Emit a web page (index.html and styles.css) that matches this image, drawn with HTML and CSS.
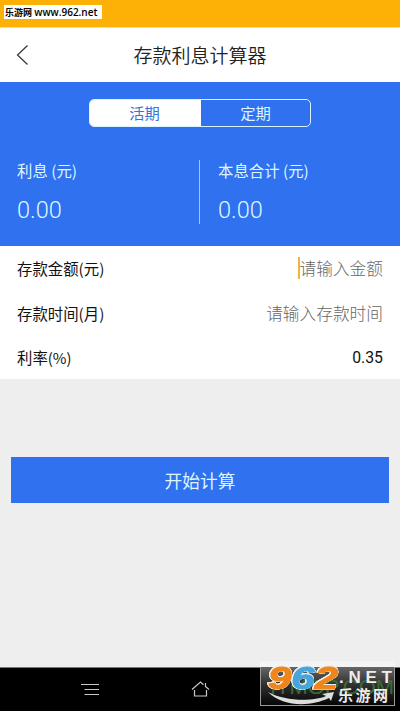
FILE: index.html
```html
<!DOCTYPE html>
<html lang="zh-CN">
<head>
<meta charset="utf-8">
<title>存款利息计算器</title>
<link rel="stylesheet" href="styles.css">
</head>
<body>
<div class="screen">
  <div class="status"><span class="site">乐游网 <b>www.962.net</b></span></div>
  <header class="header">
    <svg class="back" width="14" height="22" viewBox="0 0 14 22"><path d="M11.500 1.500 1.500 11l10 9.500"/></svg>
    <h1 class="title">存款利息计算器</h1>
  </header>
  <section class="summary">
    <div class="tabs"><div class="tab active">活期</div><div class="tab">定期</div></div>
    <div class="totals">
      <div class="total"><div class="label">利息 (元)</div><div class="value">0.00</div></div>
      <div class="total second"><div class="label">本息合计 (元)</div><div class="value">0.00</div></div>
    </div>
  </section>
  <section class="form">
    <div class="row"><span>存款金额(元)</span><span class="hint focus">请输入金额</span></div>
    <div class="row"><span>存款时间(月)</span><span class="hint">请输入存款时间</span></div>
    <div class="row"><span>利率<span class="percent">(%)</span></span><span class="rate">0.35</span></div>
  </section>
  <main class="body"><div class="submit">开始计算</div></main>
  <nav class="nav">
    <svg class="menu" width="20" height="14" viewBox="0 0 20 14"><path d="M0 1.500h18M3.500 6.500h14.500M3.500 11.500h14.500"/></svg>
    <svg class="home" width="20" height="18" viewBox="0 0 20 18"><path d="M1 9.500 9.500 2l3 2.700M14.500 6.500 18 9.500M14.500 3v4M3.500 10v6h12v-6"/></svg>
  </nav>
  <svg class="mark" width="136" height="46" viewBox="0 0 136 46">
    <defs>
      <linearGradient id="panel" x1="0" y1="0" x2="0" y2="1"><stop offset="0" stop-color="#777"/><stop offset=".5" stop-color="#333"/><stop offset="1" stop-color="#050505"/></linearGradient>
    </defs>
    <rect x=".5" y=".5" width="134" height="44" fill="url(#panel)" stroke="#999"/>
    <rect x="0" y="0" width="135" height="6" fill="#f4f4f4"/>
    <text class="green" x="10" y="33" textLength="124" lengthAdjust="spacingAndGlyphs">ITMOP.COM</text>
    <text class="digits" x="8" y="27.500" textLength="70" lengthAdjust="spacingAndGlyphs"><tspan class="orange">9</tspan><tspan class="blue">6</tspan><tspan class="orange">2</tspan></text>
    <path d="M8 31C24 40 52 41 66 35l-4-2 12-2-3 9-2-3C50 46 23 46 8 31z" fill="#ddd"/>
    <text class="net" x="79" y="21.500" textLength="53" lengthAdjust="spacing">.NET</text>
    <text class="name" x="78" y="40" textLength="50" lengthAdjust="spacing">乐游网</text>
  </svg>
</div>
</body>
</html>
```
FILE: styles.css
```css
* { box-sizing: border-box; }
body { margin: 0; font-family: Roboto, "Noto Sans CJK SC", sans-serif; color: #111; }
.screen { position: relative; width: 400px; height: 711px; display: flex; flex-direction: column; background: #eee; overflow: hidden; }
.status { height: 28px; padding: 5px 4px; background: #fdb107; border-bottom: 1px solid #f9e08e; }
.site { display: block; width: 98px; height: 14px; line-height: 15px; background: #fff; color: #000; font-size: 9px; font-weight: 700; white-space: nowrap; padding-left: 1px; }
.site b { font-family: "Open Sans", sans-serif; font-size: 10px; font-weight: 600; }
.header { height: 54px; display: flex; align-items: center; background: #fff; padding: 0 16px; }
.back { fill: none; stroke: #333; stroke-width: 1.2; }
.title { flex: 1; margin: 3px 14px 0 0; text-align: center; font-size: 19px; line-height: 28px; font-weight: 350; color: #222; }
.summary { height: 164px; background: #2f71ef; padding-top: 17px; color: #dff6ff; }
.tabs { width: 222px; height: 28px; margin: 0 auto; display: flex; border: 1px solid #d9f4ff; border-radius: 5px; overflow: hidden; }
.tab { flex: 1; text-align: center; font-size: 15.3px; line-height: 29px; }
.tab.active { background: #fff; color: #3b71d2; flex: 0 0 111px; padding-right: 2px; }
.totals { display: flex; margin-top: 33px; }
.total { width: 200px; height: 64px; padding-left: 17px; border-right: 1px solid #9cc9fa; }
.total.second { border: 0; padding-left: 18px; }
.label { font-family: "Noto Sans CJK SC", sans-serif; font-size: 15.4px; line-height: 21px; }
.value { font-size: 23.5px; line-height: 28px; margin-top: 15px; font-weight: 350; }
.form { height: 133px; background: #fff; padding: 0 17px; }
.row { height: 44.5px; display: flex; align-items: center; justify-content: space-between; font-family: "Noto Sans CJK SC", sans-serif; font-size: 15.4px; }
.percent { font-size: 14.8px; }
.hint { font-size: 16.7px; font-weight: 300; color: #666; line-height: 22px; }
.focus { border-left: 2px solid #edb63d; margin-left: -2px; }
.rate { font-family: Roboto, sans-serif; font-size: 15.8px; margin-top: 1px; }
.body { height: 288px; padding: 78px 11px 0; }
.submit { height: 46px; line-height: 50px; background: #2f71ef; color: #dff6ff; text-align: center; font-size: 17.7px; }
.nav { flex: 1; background: #000; border-top: 1px solid #777; display: flex; padding: 14px 0 0 81px; }
.nav svg { fill: none; stroke: #c8c8c8; stroke-width: 1.2; }
.menu { margin-top: 1px; }
.home { margin-left: 90px; margin-top: -2px; }
.mark { position: absolute; left: 260px; top: 661px; overflow: visible; }
.digits { font: italic 700 32px "Liberation Sans", sans-serif; stroke-width: 1px; filter: drop-shadow(.7px 0 0 #eee) drop-shadow(-.7px 0 0 #eee) drop-shadow(0 .7px 0 #eee) drop-shadow(0 -.7px 0 #eee); }
.orange { fill: #f08519; stroke: #f08519; }
.blue { fill: #45a5dc; stroke: #45a5dc; }
.net { font: 700 17px "Liberation Sans", sans-serif; fill: #eee; }
.name { font: 700 15px "Noto Sans CJK SC", sans-serif; fill: #eee; }
.green { font: 400 20px "Liberation Sans", sans-serif; fill: #386b37; }
```
